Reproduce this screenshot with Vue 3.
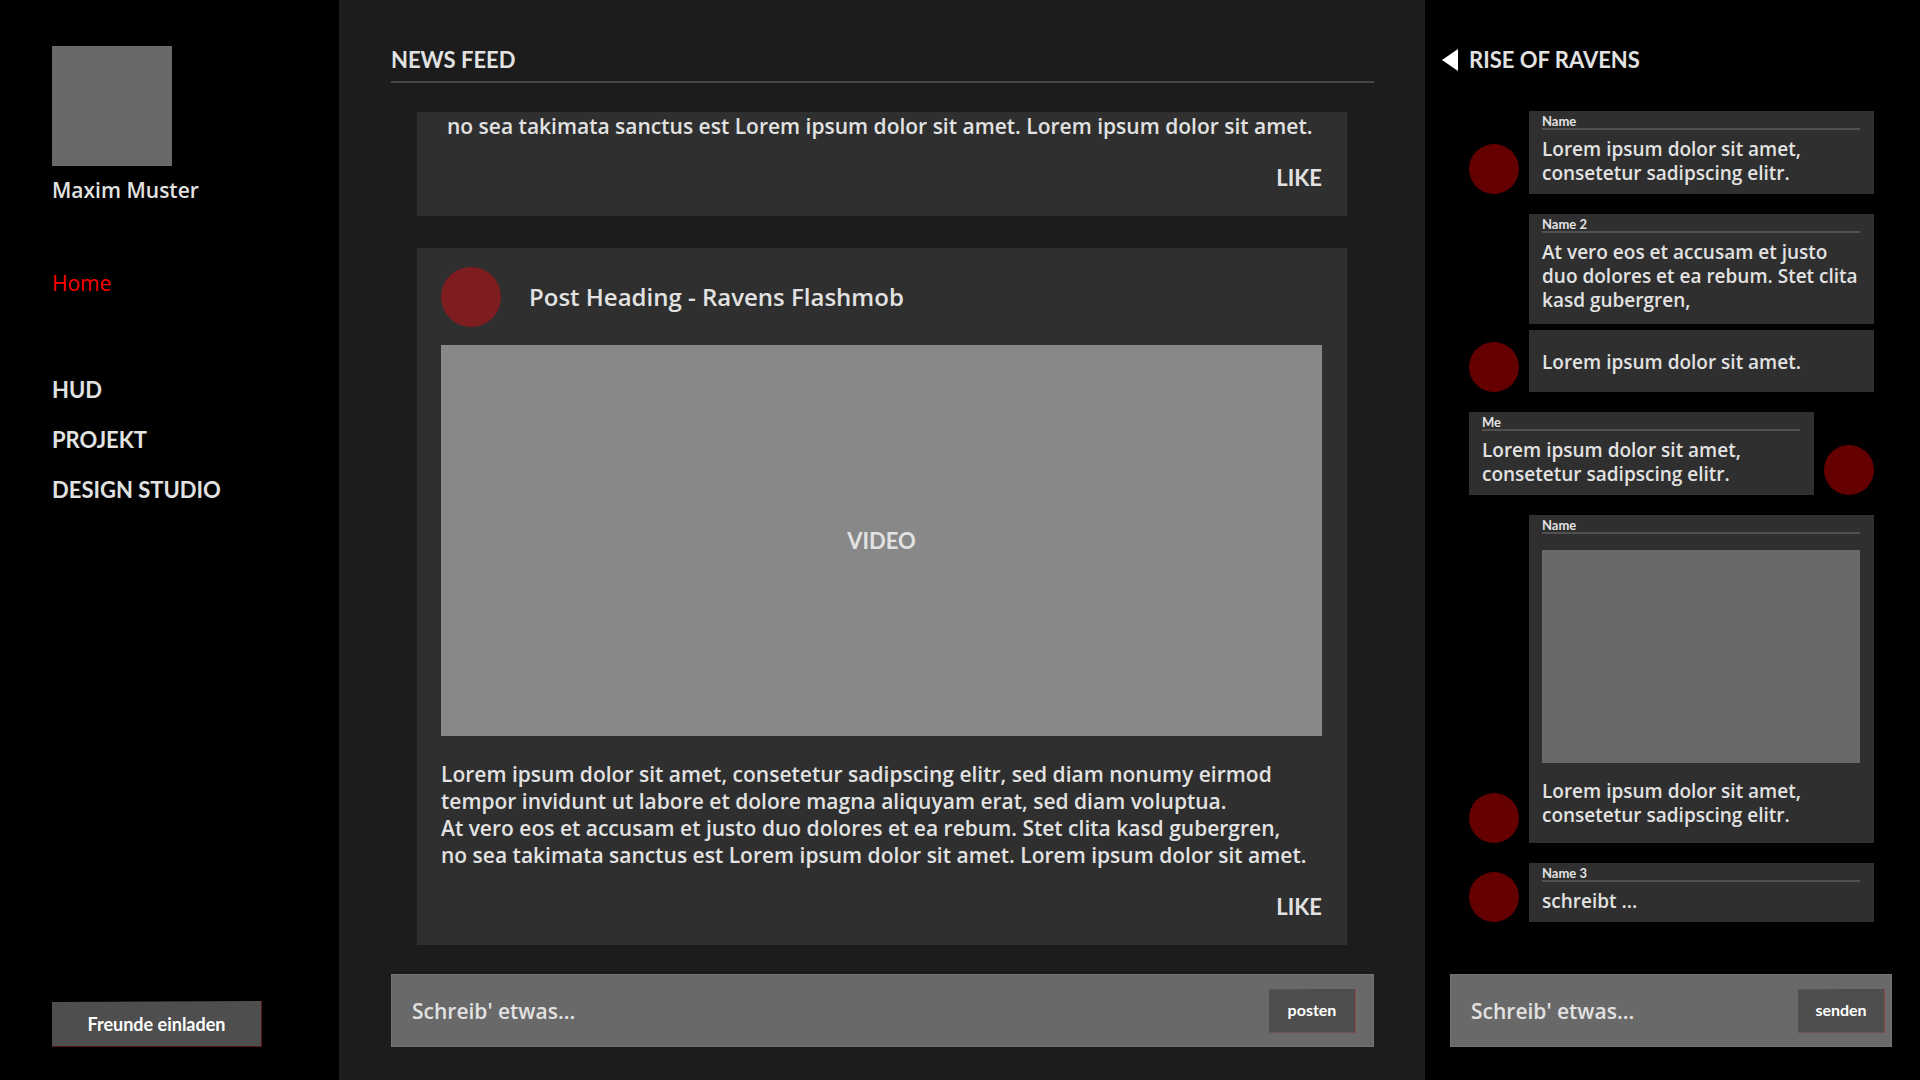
<script setup>
import { ref } from 'vue'

const navLinks = ['HUD', 'PROJEKT', 'DESIGN STUDIO']

const postDraft = ref('')
const chatDraft = ref('')

const postText = [
  'Lorem ipsum dolor sit amet, consetetur sadipscing elitr, sed diam nonumy eirmod',
  'tempor invidunt ut labore et dolore magna aliquyam erat, sed diam voluptua.',
  'At vero eos et accusam et justo duo dolores et ea rebum. Stet clita kasd gubergren,',
  'no sea takimata sanctus est Lorem ipsum dolor sit amet. Lorem ipsum dolor sit amet.',
]

const groups = [
  [{ name: 'Name', text: 'Lorem ipsum dolor sit amet,\nconsetetur sadipscing elitr.', avatar: true }],
  [
    { name: 'Name 2', text: 'At vero eos et accusam et justo\nduo dolores et ea rebum. Stet clita\nkasd gubergren,', kind: 'long' },
    { text: 'Lorem ipsum dolor sit amet.', avatar: true, kind: 'follow' },
  ],
  [{ name: 'Me', text: 'Lorem ipsum dolor sit amet,\nconsetetur sadipscing elitr.', avatar: true, mine: true }],
  [{ name: 'Name', text: 'Lorem ipsum dolor sit amet,\nconsetetur sadipscing elitr.', avatar: true, media: true, kind: 'with-media' }],
  [{ name: 'Name 3', text: 'schreibt ...', avatar: true }],
]
</script>

<template>
  <div class="app">
    <aside class="sidebar">
      <div class="profile-picture"></div>
      <p class="profile-name">Maxim Muster</p>
      <nav class="nav">
        <a href="#home" class="home">Home</a>
        <a v-for="link in navLinks" :key="link" :href="'#' + link" class="caps">{{ link }}</a>
      </nav>
      <button type="button" class="btn invite">Freunde einladen</button>
    </aside>

    <main class="main">
      <h1 class="caps underlined">NEWS FEED</h1>
      <section class="feed">
        <article class="post continued">
          <p class="post-text">{{ postText[3] }}</p>
          <button type="button" class="like caps">LIKE</button>
        </article>
        <article class="post">
          <header class="post-head">
            <span class="avatar large"></span>
            <h2>Post Heading - Ravens Flashmob</h2>
          </header>
          <div class="video caps">VIDEO</div>
          <p class="post-text">{{ postText.join('\n') }}</p>
          <button type="button" class="like caps">LIKE</button>
        </article>
      </section>
      <form class="composer" @submit.prevent>
        <input v-model="postDraft" type="text" placeholder="Schreib' etwas..." aria-label="Beitrag" />
        <button class="btn">posten</button>
      </form>
    </main>

    <aside class="chat">
      <header class="chat-head">
        <button type="button" class="back" aria-label="Zurück">
          <svg width="16" height="22" viewBox="0 0 16 22"><path d="M16 0V22L0 11Z" fill="#fff" /></svg>
        </button>
        <h2 class="caps">RISE OF RAVENS</h2>
      </header>
      <div class="messages">
        <div v-for="(group, g) in groups" :key="g" class="group">
          <div v-for="(msg, m) in group" :key="m" class="message" :class="{ mine: msg.mine }">
            <span class="avatar" :class="{ empty: !msg.avatar }"></span>
            <div class="bubble" :class="msg.kind">
              <h3 v-if="msg.name">{{ msg.name }}</h3>
              <div v-if="msg.media" class="media"></div>
              <p>{{ msg.text }}</p>
            </div>
          </div>
        </div>
      </div>
      <form class="composer narrow" @submit.prevent>
        <input v-model="chatDraft" type="text" placeholder="Schreib' etwas..." aria-label="Nachricht" />
        <button class="btn">senden</button>
      </form>
    </aside>
  </div>
</template>

<style>
body {
  margin: 0;
  background: #000;
}
</style>

<style scoped>
* {
  box-sizing: border-box;
}
.app {
  display: flex;
  min-height: 100vh;
  background: #000;
  color: #e2e2e2;
  font: 600 21px/28px "Open Sans", sans-serif;
}
h1, h2, h3, p {
  margin: 0;
  font: inherit;
}
button {
  padding: 0;
  border: 0;
  background: none;
  color: inherit;
  font: inherit;
  cursor: pointer;
}
.caps {
  font: 700 22px/28px Lato, sans-serif;
}
.sidebar {
  flex: none;
  display: flex;
  flex-direction: column;
  align-items: flex-start;
  width: 339px;
  padding: 46px 52px 33px;
}
.profile-picture {
  width: 120px;
  height: 120px;
  background: #696969;
}
.profile-name {
  margin-top: 10px;
}
.nav {
  display: flex;
  flex-direction: column;
  align-items: flex-start;
  gap: 22px;
  margin-top: 65px;
}
.nav a {
  color: inherit;
  text-decoration: none;
}
.nav .home {
  margin-bottom: 57px;
  color: #f00;
  font-weight: 400;
}
.btn {
  flex: none;
  width: 87px;
  height: 44px;
  border-right: 1px solid #8c4646;
  border-bottom: 1px solid #8c4646;
  background: #4e4e4e;
  clip-path: polygon(0 1px, 100% 0, 100% 100%, 0 100%);
  color: #fff;
  font-family: Lato, sans-serif;
  font-size: 16px;
  font-weight: 700;
}
.invite {
  width: 210px;
  height: 46px;
  margin-top: auto;
  border-color: #5c1414;
  font-size: 18px;
}
.main {
  flex: 1;
  display: flex;
  flex-direction: column;
  min-width: 0;
  padding: 46px 51px 33px 52px;
  background: #1c1c1c;
}
.underlined {
  padding-bottom: 7px;
  border-bottom: 2px solid #464646;
}
.feed {
  display: flex;
  flex-direction: column;
  gap: 32px;
  margin: 29px 27px 29px 26px;
}
.post {
  display: flex;
  flex-direction: column;
  padding: 0 25px 24px 24px;
  background: #2f2f2f;
}
.post.continued {
  padding-top: 1px;
}
.continued .post-text {
  padding-left: 6px;
}
.post-head {
  display: flex;
  align-items: center;
  gap: 28px;
  padding: 19px 0 18px;
  font-size: 24px;
}
.avatar {
  flex: none;
  width: 50px;
  height: 50px;
  border-radius: 50%;
  background: #640000;
}
.avatar.large {
  width: 60px;
  height: 60px;
  background: #7e1d1f;
}
.avatar.empty {
  visibility: hidden;
}
.video {
  display: grid;
  place-items: center;
  height: 391px;
  margin-bottom: 25px;
  background: #888;
}
.post-text {
  line-height: 27px;
  white-space: pre;
}
.like {
  align-self: flex-end;
  margin-top: 24px;
}
.composer {
  display: flex;
  align-items: center;
  height: 73px;
  margin-top: auto;
  padding: 0 17px 0 20px;
  border: 1px solid #737373;
  background: #696969;
}
.composer input {
  flex: 1;
  min-width: 0;
  padding: 0;
  border: 0;
  outline: 0;
  background: none;
  color: #e2e2e2;
  font: inherit;
}
.composer input::placeholder {
  color: #e2e2e2;
  opacity: 1;
}
.chat {
  flex: none;
  display: flex;
  flex-direction: column;
  width: 495px;
  padding: 46px 28px 33px 17px;
}
.chat-head {
  display: flex;
  align-items: center;
  gap: 11px;
}
.back {
  display: flex;
}
.messages {
  display: flex;
  flex-direction: column;
  gap: 20px;
  margin: 37px 18px 20px 27px;
}
.group {
  display: flex;
  flex-direction: column;
  gap: 6px;
}
.message {
  display: flex;
  align-items: flex-end;
  gap: 10px;
}
.message.mine {
  flex-direction: row-reverse;
}
.bubble {
  flex: 1;
  min-width: 0;
  padding: 4px 14px 9px 13px;
  background: #2f2f2f;
}
.bubble.long {
  padding-bottom: 12px;
}
.bubble.follow {
  padding-top: 13px;
  padding-bottom: 18px;
}
.bubble.with-media {
  padding-bottom: 16px;
}
.bubble h3 {
  border-bottom: 2px solid #505050;
  font: 700 13px/13px Lato, sans-serif;
}
.bubble p {
  margin-top: 7px;
  font-size: 19px;
  line-height: 24px;
  white-space: pre;
}
.bubble .media {
  height: 213px;
  margin: 16px 0;
  background: #696969;
}
.composer.narrow {
  margin-left: 8px;
  padding-right: 6px;
}
</style>
